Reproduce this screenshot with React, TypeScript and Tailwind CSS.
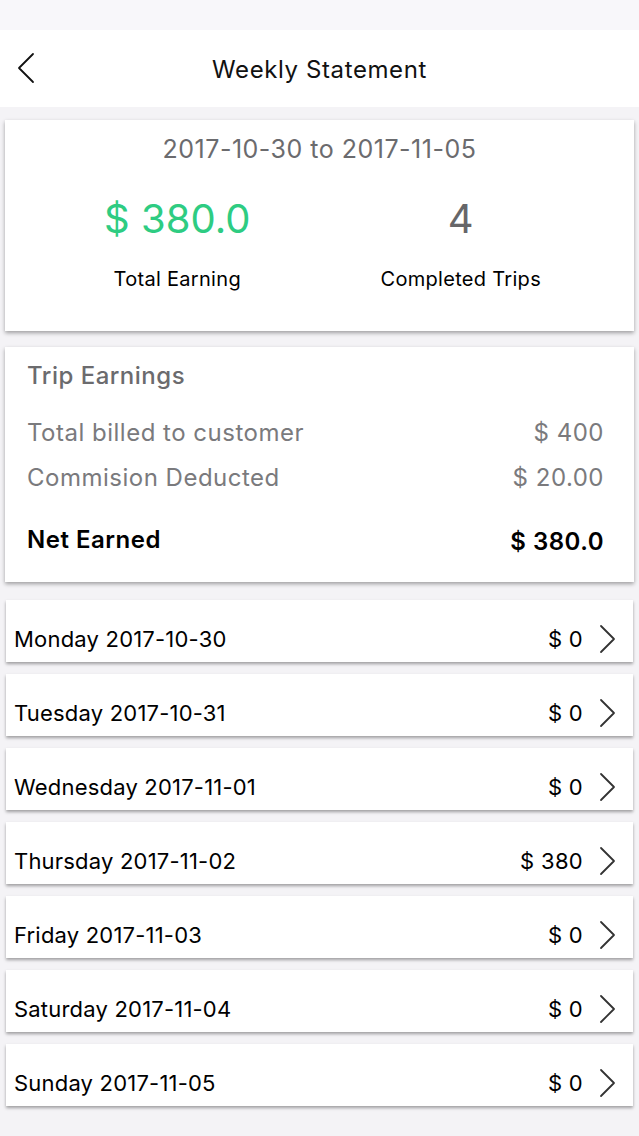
import React from "react";

const days = [
    { label: "Monday 2017-10-30", amount: "$ 0" },
    { label: "Tuesday 2017-10-31", amount: "$ 0" },
    { label: "Wednesday 2017-11-01", amount: "$ 0" },
    { label: "Thursday 2017-11-02", amount: "$ 380" },
    { label: "Friday 2017-11-03", amount: "$ 0" },
    { label: "Saturday 2017-11-04", amount: "$ 0" },
    { label: "Sunday 2017-11-05", amount: "$ 0" },
];

function Chevron({ dir }: { dir: "left" | "right" }) {
    return (
        <svg width={20} height={32} viewBox="0 0 20 32" fill="none" stroke="currentColor" strokeWidth={1.8} strokeLinecap="round" strokeLinejoin="round">
            {dir === "left" ? <polyline points="17,2 3,16 17,30" /> : <polyline points="4,3 17,16 4,29" />}
        </svg>
    );
}

function DayRow({ label, amount }: { label: string; amount: string }) {
    return (
        <div className="h-[62px] mx-[1px] bg-white shadow-[0_2px_3px_rgba(0,0,0,0.35)] flex items-end pb-[9px] pl-[8px] pr-[16px]">
            <span className="text-[22px] text-black flex-1 leading-[28px] tracking-[0.2px]">{label}</span>
            <span className="text-[22px] text-black leading-[28px] mr-[14px] tracking-[0.3px]">{amount}</span>
            <span className="text-[#333] h-[28px] flex items-center">
                <Chevron dir="right" />
            </span>
        </div>
    );
}

export default function App() {
    return (
        <div className="w-[639px] h-[1136px] bg-[#f4f3f6] overflow-hidden" style={{ fontFamily: "Inter, Roboto, 'Liberation Sans', sans-serif" }}>
            <div className="h-[30px] bg-[#f8f7fa]" />
            {/* header */}
            <div className="h-[77px] bg-white relative flex items-center justify-center">
                <span className="absolute left-[16px] top-[22px] text-[#111]">
                    <Chevron dir="left" />
                </span>
                <span className="text-[24px] text-[#111] leading-none tracking-[0.6px] mt-[2px]">Weekly Statement</span>
            </div>

            <div className="px-[5px] pt-[13px] flex flex-col">
                {/* summary card */}
                <div className="h-[211px] bg-white shadow-[0_2px_4px_rgba(0,0,0,0.35)] flex flex-col items-center">
                    <div className="mt-[15px] text-[25px] text-[#6b6b6e] leading-[28px] tracking-[0.5px]">2017-10-30 to 2017-11-05</div>
                    <div className="grid grid-cols-2 w-full mt-[30px]">
                        <span className="text-[40px] text-[#2ecc82] leading-[52px] text-center pl-[30px]">$ 380.0</span>
                        <span className="text-[40px] text-[#666669] leading-[52px] text-center pr-[32px]">4</span>
                    </div>
                    <div className="grid grid-cols-2 w-full mt-[20px]">
                        <span className="text-[20px] text-black text-center pl-[30px] leading-[28px] tracking-[0.3px]">Total Earning</span>
                        <span className="text-[20px] text-black text-center pr-[32px] leading-[28px] tracking-[0.3px]">Completed Trips</span>
                    </div>
                </div>

                {/* trip earnings */}
                <div className="h-[235px] mt-[16px] bg-white shadow-[0_2px_4px_rgba(0,0,0,0.35)] pl-[22px] pr-[30px] flex flex-col tracking-[0.5px]">
                    <div className="mt-[15px] text-[24px] font-medium text-[#6b6b6e] leading-[28px]">Trip Earnings</div>
                    <div className="mt-[29px] flex justify-between text-[24px] text-[#7a7a7d] leading-[28px]">
                        <span>Total billed to customer</span>
                        <span>$ 400</span>
                    </div>
                    <div className="mt-[17px] flex justify-between text-[24px] text-[#7a7a7d] leading-[28px]">
                        <span>Commision Deducted</span>
                        <span>$ 20.00</span>
                    </div>
                    <div className="mt-[34px] flex justify-between items-end text-[24px] font-semibold text-black leading-[28px]">
                        <span>Net Earned</span>
                        <span className="translate-y-[2px]">$ 380.0</span>
                    </div>
                </div>

                {/* daily list */}
                <div className="mt-[18px] flex flex-col gap-[12px]">
                    {days.map((d) => (
                        <DayRow key={d.label} label={d.label} amount={d.amount} />
                    ))}
                </div>
            </div>
        </div>
    );
}
